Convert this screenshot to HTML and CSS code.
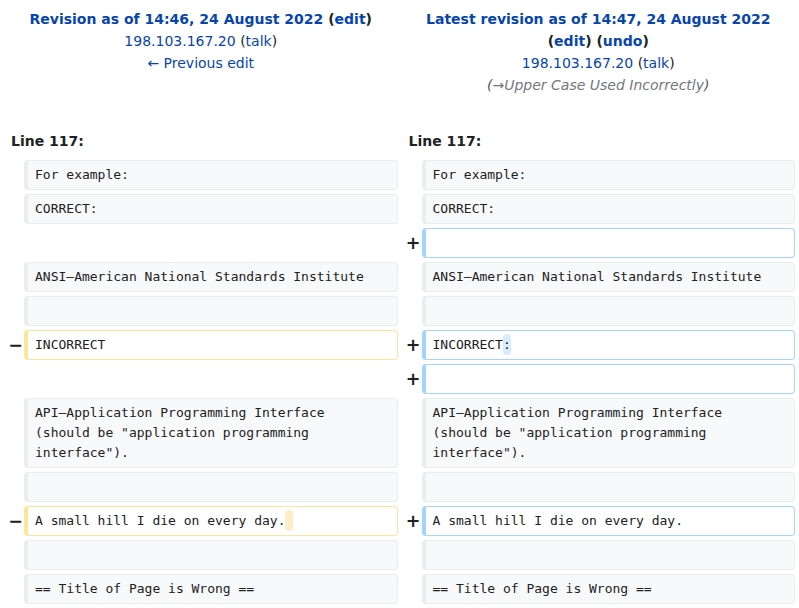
FILE: index.html
```html
<!DOCTYPE html>
<html lang="en">
<head>
<meta charset="utf-8">
<title>Difference between revisions</title>
<link rel="stylesheet" href="styles.css">
</head>
<body>
<table class="diff">
  <colgroup>
    <col class="col-marker">
    <col class="col-content">
    <col class="col-marker">
    <col class="col-content">
  </colgroup>
  <tbody>
    <tr class="diff-title">
      <td colspan="2" class="diff-otitle">
        <div class="title-line"><strong><a href="#">Revision as of 14:46, 24 August 2022</a> <span class="paren">(<a href="#">edit</a>)</span></strong></div>
        <div class="title-line"><a href="#" class="user">198.103.167.20</a> <span class="paren">(<a href="#">talk</a>)</span></div>
        <div class="title-line"><a href="#">← Previous edit</a></div>
      </td>
      <td colspan="2" class="diff-ntitle">
        <div class="title-line"><strong><a href="#">Latest revision as of 14:47, 24 August 2022</a><br><span class="paren">(<a href="#">edit</a>)</span> <span class="paren">(<a href="#">undo</a>)</span></strong></div>
        <div class="title-line"><a href="#" class="user">198.103.167.20</a> <span class="paren">(<a href="#">talk</a>)</span></div>
        <div class="title-line comment">(<a href="#" class="autocomment">→Upper Case Used Incorrectly</a>)</div>
      </td>
    </tr>
    <tr>
      <td colspan="2" class="diff-lineno">Line 117:</td>
      <td colspan="2" class="diff-lineno">Line 117:</td>
    </tr>
    <tr>
      <td class="diff-marker"></td>
      <td class="diff-context"><div>For example:</div></td>
      <td class="diff-marker"></td>
      <td class="diff-context"><div>For example:</div></td>
    </tr>
    <tr>
      <td class="diff-marker"></td>
      <td class="diff-context"><div>CORRECT:</div></td>
      <td class="diff-marker"></td>
      <td class="diff-context"><div>CORRECT:</div></td>
    </tr>
    <tr>
      <td colspan="2" class="diff-empty"></td>
      <td class="diff-marker"><span>+</span></td>
      <td class="diff-addedline"><div><br></div></td>
    </tr>
    <tr>
      <td class="diff-marker"></td>
      <td class="diff-context"><div>ANSI—American National Standards Institute</div></td>
      <td class="diff-marker"></td>
      <td class="diff-context"><div>ANSI—American National Standards Institute</div></td>
    </tr>
    <tr>
      <td class="diff-marker"></td>
      <td class="diff-context"><div><br></div></td>
      <td class="diff-marker"></td>
      <td class="diff-context"><div><br></div></td>
    </tr>
    <tr>
      <td class="diff-marker"><span>−</span></td>
      <td class="diff-deletedline"><div>INCORRECT</div></td>
      <td class="diff-marker"><span>+</span></td>
      <td class="diff-addedline"><div>INCORRECT<ins class="diffchange">:</ins></div></td>
    </tr>
    <tr>
      <td colspan="2" class="diff-empty"></td>
      <td class="diff-marker"><span>+</span></td>
      <td class="diff-addedline"><div><br></div></td>
    </tr>
    <tr>
      <td class="diff-marker"></td>
      <td class="diff-context"><div>API—Application Programming Interface<br>(should be "application programming<br>interface").</div></td>
      <td class="diff-marker"></td>
      <td class="diff-context"><div>API—Application Programming Interface<br>(should be "application programming<br>interface").</div></td>
    </tr>
    <tr>
      <td class="diff-marker"></td>
      <td class="diff-context"><div><br></div></td>
      <td class="diff-marker"></td>
      <td class="diff-context"><div><br></div></td>
    </tr>
    <tr>
      <td class="diff-marker"><span>−</span></td>
      <td class="diff-deletedline"><div>A small hill I die on every day.<del class="diffchange"> </del></div></td>
      <td class="diff-marker"><span>+</span></td>
      <td class="diff-addedline"><div>A small hill I die on every day.</div></td>
    </tr>
    <tr>
      <td class="diff-marker"></td>
      <td class="diff-context"><div><br></div></td>
      <td class="diff-marker"></td>
      <td class="diff-context"><div><br></div></td>
    </tr>
    <tr>
      <td class="diff-marker"></td>
      <td class="diff-context"><div>== Title of Page is Wrong ==</div></td>
      <td class="diff-marker"></td>
      <td class="diff-context"><div>== Title of Page is Wrong ==</div></td>
    </tr>
  </tbody>
</table>
</body>
</html>
```

FILE: styles.css
```css
html, body {
  margin: 0;
  padding: 0;
  background: #ffffff;
}

body {
  font-family: "DejaVu Sans", "Liberation Sans", sans-serif;
  font-size: 14px;
  line-height: 22px;
  color: #202122;
}

a {
  color: #0645ad;
  text-decoration: none;
}

.diff {
  width: 100%;
  table-layout: fixed;
  border-collapse: separate;
  border-spacing: 4px;
  background: #ffffff;
}

.col-marker {
  width: 16px;
}

.diff td {
  padding: 0;
}

.diff-otitle,
.diff-ntitle {
  text-align: center;
  vertical-align: top;
  padding: 4px 0 30px !important;
}

.paren {
  color: #202122;
}

.comment {
  font-style: italic;
  color: #54595d;
}

.autocomment {
  color: #72777d;
}

.diff-lineno {
  font-weight: bold;
  padding: 0 0 4px 7px !important;
  vertical-align: top;
}

.diff-marker {
  text-align: right;
  font-weight: bold;
  font-size: 17.5px;
  line-height: 21px;
  vertical-align: middle;
  color: #202122;
  white-space: nowrap;
}

.diff-marker span {
  margin-right: -3px;
}

.diff-context,
.diff-addedline,
.diff-deletedline {
  font-family: "DejaVu Sans Mono", "Liberation Mono", monospace;
  font-size: 13px;
  line-height: 20px;
  vertical-align: top;
  white-space: pre-wrap;
  word-wrap: break-word;
  border-style: solid;
  border-width: 1px 1px 1px 4px;
  border-radius: 4px;
}

.diff-context div,
.diff-addedline div,
.diff-deletedline div {
  padding: 4px 7px;
}

.diff-context {
  background: #f8f9fa;
  border-color: #eaecf0;
  color: #202122;
}

.diff-deletedline {
  border-color: #ffe49c;
  background: #ffffff;
}

.diff-addedline {
  border-color: #a3d3ff;
  background: #ffffff;
}

.diffchange {
  text-decoration: none;
  border-radius: 4px;
  padding: 3px 0;
}

.diff-addedline .diffchange {
  background: #d8ecff;
}

.diff-deletedline .diffchange {
  background: #feeec8;
}
```
